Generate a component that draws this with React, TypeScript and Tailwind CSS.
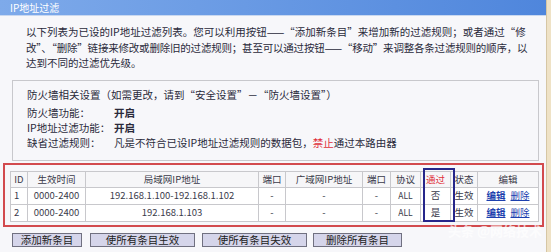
import React from "react";

const font = { fontFamily: '"Noto Sans CJK SC", "Noto Sans", sans-serif' };

const cols = [
  { w: "w-[17px]", h: "ID" },
  { w: "w-[58px]", h: "生效时间" },
  { w: "w-[173px]", h: "局域网IP地址" },
  { w: "w-[27px]", h: "端口" },
  { w: "w-[77px]", h: "广域网IP地址" },
  { w: "w-[28px]", h: "端口" },
  { w: "w-[30px]", h: "协议" },
  { w: "w-[30px]", h: "通过" },
  { w: "w-[27px]", h: "状态" },
  { w: "", h: "编辑" },
];

const rows = [
  ["1", "0000-2400", "192.168.1.100-192.168.1.102", "-", "-", "-", "ALL", "否", "生效"],
  ["2", "0000-2400", "192.168.1.103", "-", "-", "-", "ALL", "是", "生效"],
];

export default function App() {
  return (
    <div className="w-[551px] h-[252px] bg-[#efe2c6] flex overflow-hidden relative" style={font}>
      <div className="w-[547px] h-full bg-[#f7f7fa] border-r border-[#d6c6a4] flex flex-col">
        <div className="h-[16px] bg-gradient-to-r from-[#7eaaea] to-[#4f86dc] text-white text-[10px] leading-[16px] pl-[10px] border-b border-[#c9d8f0]">
          IP地址过滤
        </div>
        <div className="pl-[26px] pt-[8px] text-[10.5px] leading-[15.5px] text-[#2a2a3a] whitespace-nowrap">
          <p>以下列表为已设的IP地址过滤列表。您可以利用按钮——“添加新条目”来增加新的过滤规则；或者通过“修</p>
          <p className="tracking-[-0.2px]">改”、“删除”链接来修改或删除旧的过滤规则；甚至可以通过按钮——“移动”来调整各条过滤规则的顺序，以</p>
          <p>达到不同的过滤优先级。</p>
        </div>
        <div className="mx-[12px] w-[527px] mt-[9px] h-[81px] border border-[#c8c8cc] bg-[#f7f7fa] pl-[14px] pt-[6px] text-[10.5px] text-[#2a2a3a]">
          <div className="h-[15px] leading-[15px] mb-[3px]">防火墙相关设置（如需更改，请到“安全设置”－“防火墙设置”）</div>
          <div className="h-[15px] leading-[15px] flex">
            <span className="w-[87px]">防火墙功能：</span>
            <span className="font-bold">开启</span>
          </div>
          <div className="h-[15px] leading-[15px] flex">
            <span className="w-[87px]">IP地址过滤功能：</span>
            <span className="font-bold">开启</span>
          </div>
          <div className="h-[15px] leading-[15px] flex">
            <span className="w-[87px]">缺省过滤规则：</span>
            <span>
              凡是不符合已设IP地址过滤规则的数据包，<span className="text-[#e0303a]">禁止</span>通过本路由器
            </span>
          </div>
        </div>
        <div className="ml-[3px] w-[541px] mt-[2px] h-[64px] border-2 border-[#d24a4e] pl-[5px] pt-[6px] relative">
          <table className="w-[529px] border-collapse text-[9.5px] text-[#3a3a4a] bg-white">
            <thead>
              <tr className="h-[16px] bg-[#f6f6f8]">
                {cols.map((c, i) => (
                  <th
                    key={i}
                    className={`${c.w} border border-[#c8c8cc] font-normal text-center leading-[14px] p-0 ${
                      i === 7 ? "text-[#e0303a]" : ""
                    }`}
                  >
                    {c.h}
                  </th>
                ))}
              </tr>
            </thead>
            <tbody>
              {rows.map((r, ri) => (
                <tr key={ri} className="h-[17px]">
                  {r.map((v, i) => (
                    <td
                      key={i}
                      className={`border border-[#c8c8cc] text-center p-0 leading-[15px] ${
                        i === 0 ? "text-left pl-[3px]" : ""
                      } ${i === 6 ? "text-[8.5px]" : ""}`}
                    >
                      {v}
                    </td>
                  ))}
                  <td className="border border-[#c8c8cc] text-center p-0 leading-[15px]">
                    <span className="text-[#1c3fae] underline font-bold">编辑</span>
                    <span className="ml-[5px] text-[#1c3fae] underline">删除</span>
                  </td>
                </tr>
              ))}
            </tbody>
          </table>
          <div className="absolute left-[418px] top-[3px] w-[32px] h-[54px] border-2 border-[#26268a]" />
        </div>
        <div className="flex pl-[12px] mt-[6px] text-[10.5px] text-[#222]">
          <div className="w-[70px] h-[14px] leading-[12px] text-center bg-[#d5d5ea] border border-[#707080]">添加新条目</div>
          <div className="ml-[8px] w-[105px] h-[14px] leading-[12px] text-center bg-[#d5d5ea] border border-[#707080]">使所有条目生效</div>
          <div className="ml-[7px] w-[105px] h-[14px] leading-[12px] text-center bg-[#d5d5ea] border border-[#707080]">使所有条目失效</div>
          <div className="ml-[6px] w-[89px] h-[14px] leading-[12px] text-center bg-[#d5d5ea] border border-[#707080]">删除所有条目</div>
        </div>
      </div>
      <div className="absolute left-[448px] top-[222px] text-[13px] leading-[18px] text-white/70 font-bold whitespace-nowrap">
        头条 @网络技术
      </div>
    </div>
  );
}
